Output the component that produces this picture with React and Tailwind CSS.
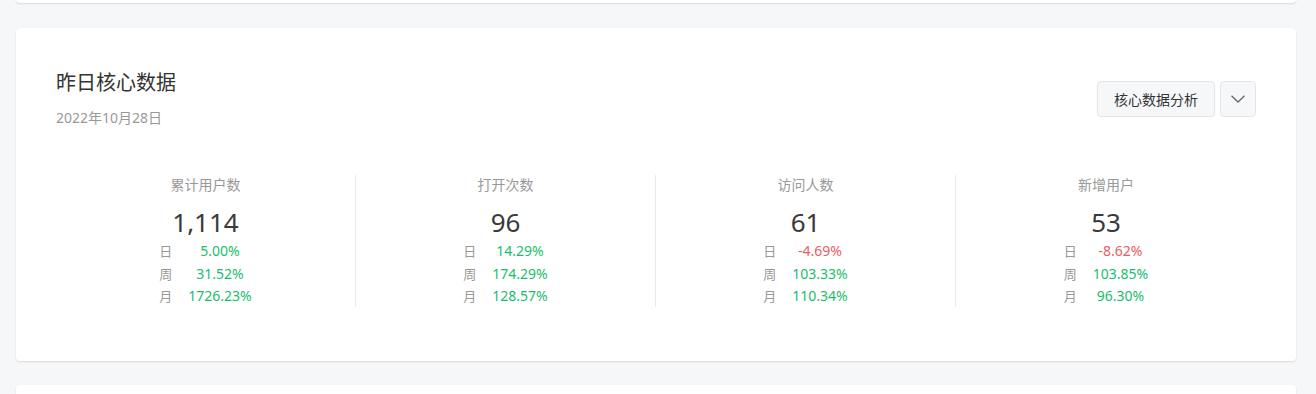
const stats = [
  { label: '累计用户数', value: '1,114', rows: [['日', '5.00%', 'up'], ['周', '31.52%', 'up'], ['月', '1726.23%', 'up']] },
  { label: '打开次数', value: '96', rows: [['日', '14.29%', 'up'], ['周', '174.29%', 'up'], ['月', '128.57%', 'up']] },
  { label: '访问人数', value: '61', rows: [['日', '-4.69%', 'down'], ['周', '103.33%', 'up'], ['月', '110.34%', 'up']] },
  { label: '新增用户', value: '53', rows: [['日', '-8.62%', 'down'], ['周', '103.85%', 'up'], ['月', '96.30%', 'up']] },
]

export default function App() {
  return (
    <div
      className="w-[1316px] h-[394px] overflow-hidden bg-[#f5f7f9] pl-4 pr-5"
      style={{ fontFamily: '"Noto Sans", "Noto Sans CJK SC", sans-serif' }}
    >
      <div className="h-[4px] -mt-px bg-white rounded-b shadow-[0_1px_2px_rgba(0,0,0,0.12)]" />

      <div className="mt-[25px] h-[333px] bg-white rounded shadow-[0_1px_2px_rgba(0,0,0,0.12)] px-10 pt-[40px]">
        <div className="flex items-start justify-between">
          <div>
            <h2 className="text-[20px] leading-[30px] text-[#333]">昨日核心数据</h2>
            <p className="mt-[10px] text-[14px] leading-[20px] text-[#999]">2022年10月28日</p>
          </div>
          <div className="flex gap-[5px] mt-[13px]">
            <button className="h-[36px] w-[118px] rounded border border-[#e3e5e8] bg-[#f5f7f9] text-[14px] text-[#333]">
              核心数据分析
            </button>
            <button className="h-[36px] w-[36px] rounded border border-[#e3e5e8] bg-[#f5f7f9] flex items-center justify-center">
              <svg width="14" height="8" viewBox="0 0 14 8" fill="none" stroke="#666" strokeWidth="1.3">
                <polyline points="0.5,0.8 7,7 13.5,0.8" />
              </svg>
            </button>
          </div>
        </div>

        <div className="mt-[47px] grid grid-cols-4">
          {stats.map((s, i) => (
            <div
              key={s.label}
              className={`flex flex-col items-center ${i < 3 ? 'border-r border-[#e8eaec]' : ''} h-[132px]`}
            >
              <div className="-mt-px text-[14px] leading-[22px] text-[#999]">{s.label}</div>
              <div className="mt-[11px] text-[26px] leading-[30px] text-[#3a3a3a]">{s.value}</div>
              <table className="mt-[3px] text-[14px]">
                <tbody>
                  {s.rows.map(([k, v, dir]) => (
                    <tr key={k} className="leading-[22.5px]">
                      <td className="pr-4 text-[13px] text-[#999]">{k}</td>
                      <td className={`text-center ${dir === 'up' ? 'text-[#19be6b]' : 'text-[#ee5a61]'}`}>{v}</td>
                    </tr>
                  ))}
                </tbody>
              </table>
            </div>
          ))}
        </div>
      </div>

      <div className="mt-[24px] h-[40px] bg-white rounded shadow-[0_1px_2px_rgba(0,0,0,0.12)]" />
    </div>
  )
}
